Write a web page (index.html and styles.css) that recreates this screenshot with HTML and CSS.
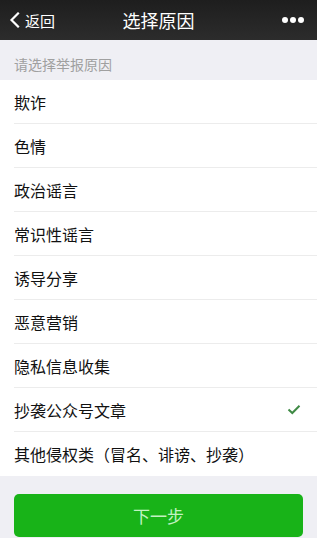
FILE: index.html
```html
<!DOCTYPE html>
<html lang="zh">
<head>
<meta charset="utf-8">
<link rel="stylesheet" href="styles.css">
</head>
<body>
<div class="page">
  <header class="nav">
    <div class="back">
      <svg class="chev" width="11" height="16" viewBox="0 0 11 16"><path d="M9 1.5 L2.5 8 L9 14.5" fill="none" stroke="#fff" stroke-width="2.2" stroke-linecap="square"/></svg>
      <span>返回</span>
    </div>
    <div class="title">选择原因</div>
    <div class="more"><i></i><i></i><i></i></div>
  </header>
  <div class="section">请选择举报原因</div>
  <ul class="list">
    <li class="item">欺诈</li>
    <li class="item">色情</li>
    <li class="item">政治谣言</li>
    <li class="item">常识性谣言</li>
    <li class="item">诱导分享</li>
    <li class="item">恶意营销</li>
    <li class="item">隐私信息收集</li>
    <li class="item">抄袭公众号文章<svg class="check" width="14" height="11" viewBox="0 0 14 11"><path d="M1.5 5.5 L5.3 9 L12.5 1.8" fill="none" stroke="#3f8a45" stroke-width="2"/></svg></li>
    <li class="item">其他侵权类（冒名、诽谤、抄袭）</li>
  </ul>
  <div class="actions">
    <button class="btn">下一步</button>
  </div>
</div>
</body>
</html>
```
FILE: styles.css
```css
* { box-sizing: border-box; margin: 0; padding: 0; }
html, body { width: 317px; height: 538px; overflow: hidden; }
body {
  background: #efeff4;
  font-family: "Noto Sans CJK SC", "Noto Sans", sans-serif;
  color: #111;
}
.page { display: flex; flex-direction: column; }
.nav {
  height: 40px;
  background: linear-gradient(#1e1e1e, #2c2c2c);
  display: flex;
  align-items: center;
  justify-content: space-between;
  padding: 0 13px 0 9px;
  position: relative;
  color: #fff;
}
.back { display: flex; align-items: center; gap: 5px; font-size: 15px; }
.chev { display: block; }
.title {
  position: absolute;
  left: 0; right: 0;
  text-align: center;
  font-size: 18px;
  pointer-events: none;
}
.more { display: flex; gap: 2px; }
.more i { width: 6px; height: 6px; border-radius: 50%; background: #fff; display: block; }
.section {
  height: 40px;
  padding: 8px 14px 0;
  display: flex;
  align-items: center;
  font-size: 14px;
  color: #a0a0a0;
  background: #efeff4;
}
.list { list-style: none; background: #fff; }
.item {
  height: 44px;
  margin-left: 14px;
  padding-right: 16px;
  display: flex;
  align-items: center;
  justify-content: space-between;
  font-size: 16px;
  color: #111;
  border-bottom: 1px solid #ececec;
}
.item:last-child { border-bottom: none; }
.actions { padding: 18px 14px 0; }
.btn {
  width: 100%;
  height: 43px;
  border: none;
  border-radius: 5px;
  background: #18b318;
  color: #c2f2c2;
  font-family: "Noto Sans CJK SC", "Noto Sans", sans-serif;
  font-size: 17px;
}
```
